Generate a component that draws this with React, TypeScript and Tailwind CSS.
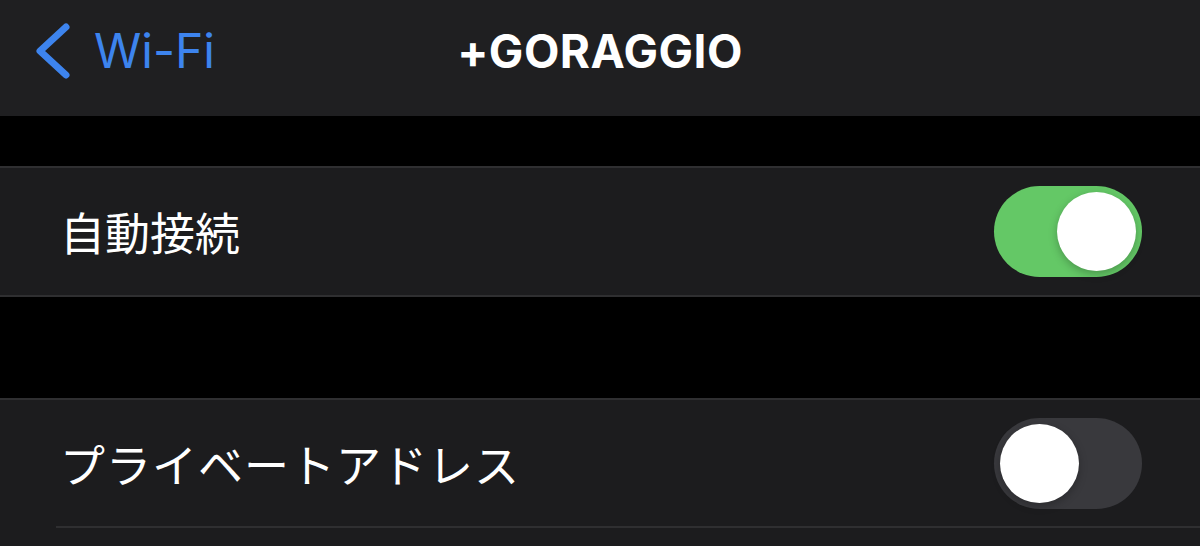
import React from "react";

function Toggle({ on }: { on: boolean }) {
  return (
    <div
      className={
        "flex h-[91px] w-[148px] shrink-0 items-center rounded-full px-[6px] " +
        (on ? "justify-end bg-[#64c866]" : "justify-start bg-[#39393d]")
      }
    >
      <div className="h-[79px] w-[79px] rounded-full bg-white shadow-[0_3px_8px_rgba(0,0,0,0.25)]" />
    </div>
  );
}

export default function App() {
  const latin = { fontFamily: "Inter, 'Liberation Sans', sans-serif" };
  const jp = { fontFamily: "'Noto Sans CJK JP', 'Noto Sans', sans-serif" };
  return (
    <div className="h-[546px] w-[1200px] overflow-hidden bg-black">
      {/* Nav bar */}
      <div className="grid h-[116px] grid-cols-[1fr_auto_1fr] items-center bg-[#1f1f21] pb-[14px]">
        <div className="flex items-center">
          <svg width="90" height="100" viewBox="0 0 90 100" className="shrink-0">
            <polyline
              points="66,26 40,50 66,74"
              fill="none"
              stroke="#3d84ee"
              strokeWidth="7"
              strokeLinecap="round"
              strokeLinejoin="round"
            />
          </svg>
          <span
            className="ml-[4px] text-[48px] leading-none text-[#3d84ee]"
            style={latin}
          >
            Wi-Fi
          </span>
        </div>
        <div
          className="text-[46px] font-bold leading-none tracking-[0.5px] text-white"
          style={latin}
        >
          +GORAGGIO
        </div>
        <div />
      </div>

      {/* spacer */}
      <div className="h-[50px]" />

      {/* Row 1 */}
      <div className="border-y-2 border-[#2f2f31] bg-[#1c1c1e]">
        <div className="flex h-[127px] items-center justify-between pl-[60px] pr-[58px]">
          <span className="text-[45px] leading-none text-white" style={jp}>
            自動接続
          </span>
          <Toggle on={true} />
        </div>
      </div>

      {/* spacer */}
      <div className="h-[101px]" />

      {/* Row 2 */}
      <div className="border-t-2 border-[#2f2f31] bg-[#1c1c1e]">
        <div className="flex h-[126px] items-center justify-between pl-[60px] pr-[58px]">
          <span className="text-[45px] leading-none tracking-[1px] text-white" style={jp}>
            プライベートアドレス
          </span>
          <Toggle on={false} />
        </div>
        <div className="ml-[56px] h-[2px] bg-[#2f2f31]" />
        <div className="h-[40px]" />
      </div>
    </div>
  );
}
